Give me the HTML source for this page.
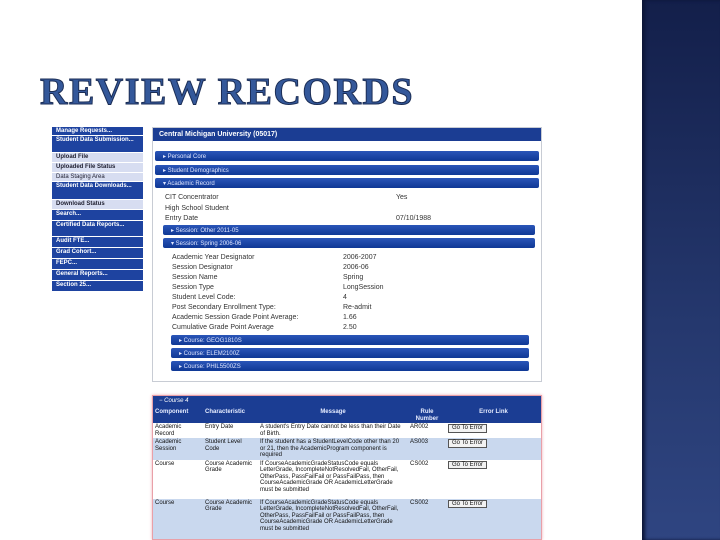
<!DOCTYPE html>
<html><head><meta charset="utf-8"><style>
*{margin:0;padding:0;box-sizing:border-box}
body{width:720px;height:540px;position:relative;overflow:hidden;background:#fff;font-family:"Liberation Sans",sans-serif}
.abs{position:absolute}
.band{left:642px;top:0;width:78px;height:540px;background:linear-gradient(#131f4a,#25386e 60%,#2f4581);box-shadow:inset 3px 0 3px #0d1638}
.title{left:40px;top:70px;font-family:"Liberation Serif",serif;font-weight:bold;font-size:38px;color:#34589a;-webkit-text-stroke:1px #1b2d55;letter-spacing:1.5px}
.nav{left:52px;top:127px;width:91px;font-size:6px;font-weight:bold;color:#fff}
.nav div{border-bottom:1px solid #fff;padding:1px 4px;background:#1e43a0}
.nav .sub{background:#d7ddf1;color:#223}
.main{left:152px;top:127px;width:390px;height:255px;border:1px solid #c8ccd4;background:#fff}
.bar{position:absolute;height:10px;background:linear-gradient(#2a55b8,#0f3895);color:#dfe6ff;font-size:6px;padding:2px 8px;border-radius:2px}
.row{position:absolute;font-size:7px;color:#333}
.tbl{left:152px;top:395px;width:390px;height:145px;border:1px solid #e9a0a8;box-shadow:0 0 3px #f0b0b8;background:#fff;font-size:6px;color:#111;overflow:hidden}
table{border-collapse:collapse;width:100%}
td{vertical-align:top;padding:1px 2px;line-height:6.5px}
.btn{border:1px solid #555;background:#f2f2f2;padding:0 3px;display:inline-block}
</style></head><body>
<div class="abs band"></div>
<div class="abs title">REVIEW RECORDS</div>
<div class="abs nav">
<div style="height:9px">Manage Requests...</div>
<div style="height:17px">Student Data Submission...</div>
<div class="sub" style="height:10px">Upload File</div>
<div class="sub" style="height:10px">Uploaded File Status</div>
<div class="sub" style="height:9px;font-weight:normal">Data Staging Area</div>
<div style="height:18px">Student Data Downloads...</div>
<div class="sub" style="height:10px">Download Status</div>
<div style="height:11px">Search...</div>
<div style="height:16px">Certified Data Reports...</div>
<div style="height:11px">Audit FTE...</div>
<div style="height:11px">Grad Cohort...</div>
<div style="height:11px">FEPC...</div>
<div style="height:11px">General Reports...</div>
<div style="height:11px">Section 25...</div>
</div>
<div class="abs main">
<div class="abs" style="left:0;top:0;width:388px;height:13px;background:#1b3d93;color:#fff;font-size:7px;font-weight:bold;padding:3px 6px">Central Michigan University (05017)</div>
<div class="bar" style="left:2px;top:23px;width:384px">▸ Personal Core</div>
<div class="bar" style="left:2px;top:37px;width:384px">▸ Student Demographics</div>
<div class="bar" style="left:2px;top:50px;width:384px">▾ Academic Record</div>
<div class="row" style="left:12px;top:66px">CIT Concentrator</div><div class="row" style="left:243px;top:66px">Yes</div>
<div class="row" style="left:12px;top:77px">High School Student</div>
<div class="row" style="left:12px;top:87px">Entry Date</div><div class="row" style="left:243px;top:87px">07/10/1988</div>
<div class="bar" style="left:10px;top:97px;width:372px">▸ Session: Other 2011-05</div>
<div class="bar" style="left:10px;top:110px;width:372px">▾ Session: Spring 2006-06</div>
<div class="row" style="left:19px;top:126px">Academic Year Designator</div><div class="row" style="left:190px;top:126px">2006-2007</div>
<div class="row" style="left:19px;top:136px">Session Designator</div><div class="row" style="left:190px;top:136px">2006-06</div>
<div class="row" style="left:19px;top:146px">Session Name</div><div class="row" style="left:190px;top:146px">Spring</div>
<div class="row" style="left:19px;top:156px">Session Type</div><div class="row" style="left:190px;top:156px">LongSession</div>
<div class="row" style="left:19px;top:166px">Student Level Code:</div><div class="row" style="left:190px;top:166px">4</div>
<div class="row" style="left:19px;top:176px">Post Secondary Enrollment Type:</div><div class="row" style="left:190px;top:176px">Re-admit</div>
<div class="row" style="left:19px;top:186px">Academic Session Grade Point Average:</div><div class="row" style="left:190px;top:186px">1.66</div>
<div class="row" style="left:19px;top:196px">Cumulative Grade Point Average</div><div class="row" style="left:190px;top:196px">2.50</div>
<div class="bar" style="left:18px;top:207px;width:358px">▸ Course: GEOG1810S</div>
<div class="bar" style="left:18px;top:220px;width:358px">▸ Course: ELEM2100Z</div>
<div class="bar" style="left:18px;top:233px;width:358px">▸ Course: PHIL5500ZS</div>
</div>
<div class="abs tbl">
<div style="background:#1b3d93;color:#fff;height:12px;padding:2px 6px;font-style:italic">− Course 4</div>
<table>
<tr style="background:#1b3d93;color:#e6ecff;font-weight:bold;height:14px"><td style="width:50px">Component</td><td style="width:55px">Characteristic</td><td style="text-align:center;width:150px">Message</td><td style="width:38px;text-align:center">Rule Number</td><td style="text-align:center">Error Link</td></tr>
<tr style="height:15px"><td>Academic Record</td><td>Entry Date</td><td>A student's Entry Date cannot be less than their Date of Birth.</td><td>AR002</td><td><span class="btn">Go To Error</span></td></tr>
<tr style="background:#c9d8ee;height:21px"><td>Academic Session</td><td>Student Level Code</td><td>If the student has a StudentLevelCode other than 20 or 21, then the AcademicProgram component is required</td><td>AS003</td><td><span class="btn">Go To Error</span></td></tr>
<tr style="height:39px"><td>Course</td><td>Course Academic Grade</td><td>If CourseAcademicGradeStatusCode equals LetterGrade, IncompleteNotResolvedFail, OtherFail, OtherPass, PassFailFail or PassFailPass, then CourseAcademicGrade OR AcademicLetterGrade must be submitted</td><td>CS002</td><td><span class="btn">Go To Error</span></td></tr>
<tr style="background:#c9d8ee;height:44px"><td>Course</td><td>Course Academic Grade</td><td>If CourseAcademicGradeStatusCode equals LetterGrade, IncompleteNotResolvedFail, OtherFail, OtherPass, PassFailFail or PassFailPass, then CourseAcademicGrade OR AcademicLetterGrade must be submitted</td><td>CS002</td><td><span class="btn">Go To Error</span></td></tr>
</table>
</div>
</body></html>
